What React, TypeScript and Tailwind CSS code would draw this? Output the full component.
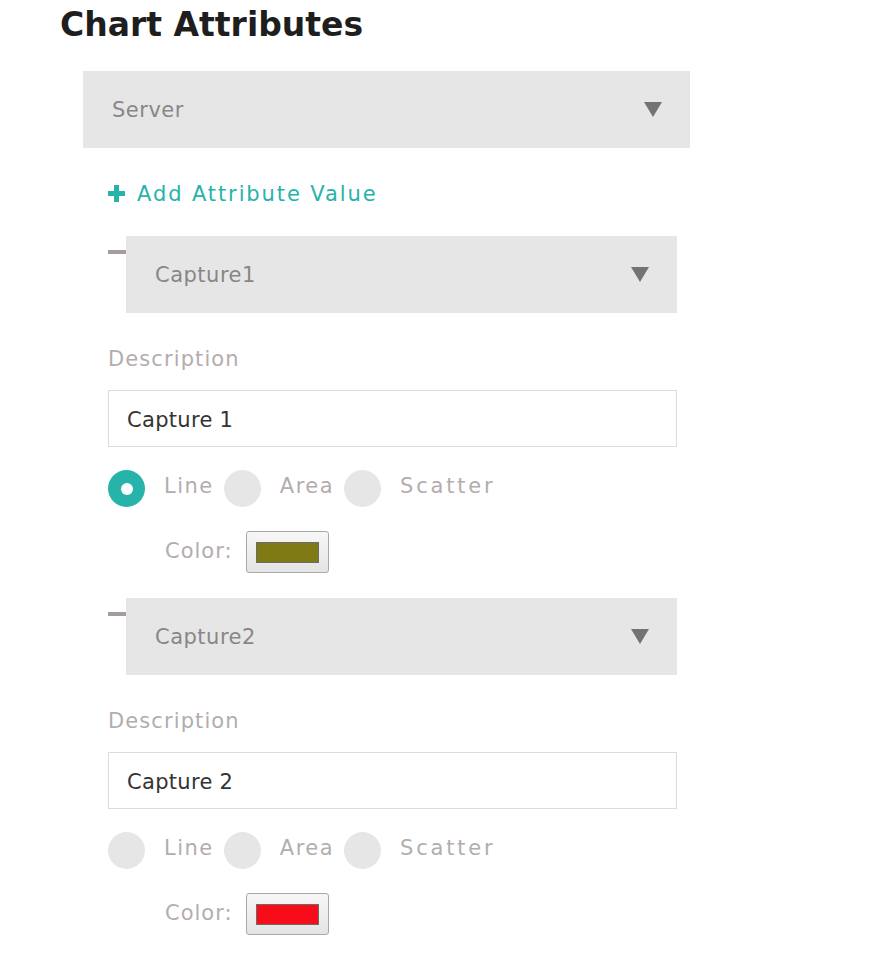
const FONT = { fontFamily: '"DejaVu Sans", "Liberation Sans", sans-serif' };

function Arrow() {
  return (
    <svg width="18" height="15" viewBox="0 0 18 15" className="shrink-0">
      <polygon points="0,0 18,0 9,15" fill="#737373" />
    </svg>
  );
}

function Plus() {
  return (
    <svg width="17" height="17" viewBox="0 0 17 17" className="shrink-0">
      <path d="M6 0h5v6h6v5h-6v6h-5v-6h-6v-5h6z" fill="#26b3aa" />
    </svg>
  );
}

function Select({ label, className }: { label: string; className: string }) {
  return (
    <div
      className={`bg-[#e6e6e6] flex items-center justify-between pr-[28px] ${className}`}
    >
      <span className="text-[21px] text-[#8a8686] tracking-[0.5px] pt-[2px]">{label}</span>
      <Arrow />
    </div>
  );
}

function Radio({
  checked,
  label,
  wide,
}: {
  checked: boolean;
  label: string;
  wide?: boolean;
}) {
  return (
    <div className="flex items-center">
      {checked ? (
        <div className="w-[37px] h-[37px] rounded-full bg-[#26b3aa] flex items-center justify-center">
          <div className="w-[12px] h-[12px] rounded-full bg-white" />
        </div>
      ) : (
        <div className="w-[37px] h-[37px] rounded-full bg-[#e6e6e6]" />
      )}
      <span
        className={`ml-[19px] mr-[10px] text-[21px] text-[#b3adad] pb-[4px] ${
          wide ? "tracking-[2.8px]" : "tracking-[1.5px]"
        }`}
      >
        {label}
      </span>
    </div>
  );
}

function Group({
  name,
  desc,
  checked,
  color,
}: {
  name: string;
  desc: string;
  checked: boolean;
  color: string;
}) {
  return (
    <div className="flex flex-col">
      <div className="flex items-start">
        <div className="w-[18px] h-[4px] bg-[#a39d9d] mt-[14px]" />
        <Select label={name} className="w-[551px] h-[77px] pl-[29px]" />
      </div>
      <div className="mt-[30px] h-[30px] flex items-center pt-[4px] text-[21px] text-[#b3adad] tracking-[1.1px]">
        Description
      </div>
      <div className="mt-[17px] w-[569px] h-[57px] border border-[#dcdcdc] flex items-center pl-[18px] pt-[5px] text-[21px] text-[#333] tracking-[0.3px]">
        {desc}
      </div>
      <div className="mt-[23px] flex items-center">
        <Radio checked={checked} label="Line" />
        <Radio checked={false} label="Area" />
        <Radio checked={false} label="Scatter" wide />
      </div>
      <div className="mt-[24px] flex items-center pl-[57px]">
        <span className="text-[21px] text-[#b3adad] tracking-[1px] mr-[13px]">Color:</span>
        <div className="w-[83px] h-[42px] rounded-[3px] border border-[#a8a8a8] bg-gradient-to-b from-[#f7f7f7] to-[#e4e4e4] flex items-center justify-center">
          <div className="w-[63px] h-[21px] border border-[#6b6b6b]" style={{ background: color }} />
        </div>
      </div>
    </div>
  );
}

export default function App() {
  return (
    <div className="w-[872px] h-[970px] bg-white" style={FONT}>
      <h1 className="pl-[60px] pt-[7px] text-[33px] leading-[36px] font-bold text-[#1e1e1e]">
        Chart Attributes
      </h1>
      <div className="pl-[83px] mt-[28px] flex flex-col">
        <Select label="Server" className="w-[607px] h-[77px] pl-[29px]" />
        <div className="pl-[25px] flex flex-col">
          <div className="mt-[30px] h-[30px] flex items-center text-[#26b3aa]">
            <Plus />
            <span className="ml-[12px] pt-[4px] text-[21px] tracking-[1.9px]">
              Add Attribute Value
            </span>
          </div>
          <div className="mt-[28px]">
            <Group name="Capture1" desc="Capture 1" checked={true} color="#807a14" />
          </div>
          <div className="mt-[25px]">
            <Group name="Capture2" desc="Capture 2" checked={false} color="#f70d1a" />
          </div>
        </div>
      </div>
    </div>
  );
}
